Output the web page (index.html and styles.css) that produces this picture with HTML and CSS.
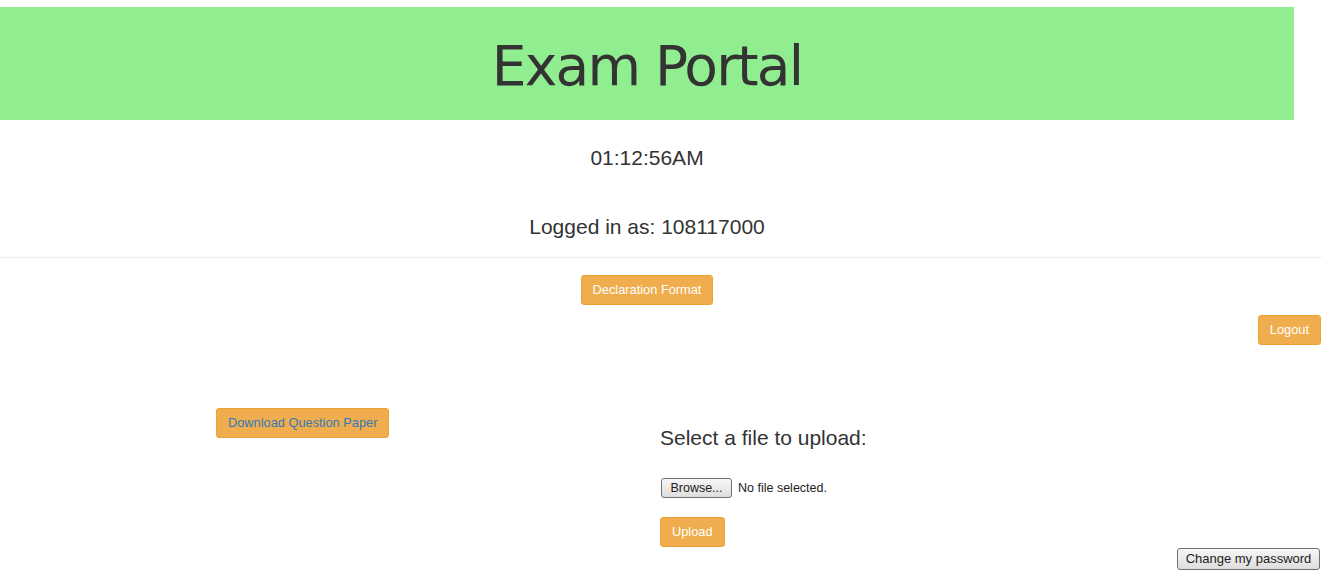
FILE: index.html
```html
<!DOCTYPE html>
<html>
<head>
<meta charset="utf-8">
<title>Exam Portal</title>
<link rel="stylesheet" href="styles.css">
</head>
<body>
<header class="banner">
  <h1 class="title">Exam Portal</h1>
</header>
<div class="info">
  <div class="clock">01:12:56AM</div>
  <div class="user">Logged in as: 108117000</div>
</div>
<hr class="rule">
<div class="decl-row">
  <button class="btn btn-warning">Declaration Format</button>
</div>
<div class="logout-row">
  <button class="btn btn-warning">Logout</button>
</div>
<div class="work">
  <div class="left-col">
    <button class="btn btn-warning btn-link-text">Download Question Paper</button>
  </div>
  <div class="right-col">
    <div class="upload-title">Select a file to upload:</div>
    <div class="file-row">
      <button class="native-btn browse">Browse...</button>
      <span class="file-status">No file selected.</span>
    </div>
    <button class="btn btn-warning">Upload</button>
  </div>
</div>
<div class="pw-row">
  <button class="native-btn pw">Change my password</button>
</div>
</body>
</html>
```
FILE: styles.css
```css
html, body {
  margin: 0;
  padding: 0;
  background: #fff;
}
body {
  font-family: "Liberation Sans", Arial, sans-serif;
  color: #333;
  width: 1330px;
}
.banner {
  margin-top: 7px;
  width: 1294px;
  height: 113px;
  background: #90ee90;
  display: flex;
  align-items: center;
  justify-content: center;
}
.title {
  margin: 0;
  font-family: "Comic Sans MS", "DejaVu Sans", sans-serif;
  font-weight: normal;
  font-size: 55px;
  color: #333;
  letter-spacing: -1.8px;
  padding-top: 5px;
}
.info {
  width: 1294px;
  text-align: center;
  padding-top: 26px;
}
.clock, .user {
  font-size: 21px;
  line-height: 24px;
}
.user {
  margin-top: 45px;
}
.rule {
  margin: 18px 8px 0 0;
  border: 0;
  border-top: 1px solid #eee;
  height: 0;
}
.btn {
  font-family: "Liberation Sans", Arial, sans-serif;
  font-size: 12.8px;
  line-height: 18px;
  padding: 5px 11px;
  border: 1px solid #eea236;
  border-radius: 3px;
  background: #f0ad4e;
  color: #fff;
  cursor: pointer;
}
.btn-link-text {
  color: #337ab7;
}
.decl-row {
  width: 1294px;
  display: flex;
  justify-content: center;
  margin-top: 17px;
}
.logout-row {
  display: flex;
  justify-content: flex-end;
  padding-right: 9px;
  margin-top: 10px;
}
.work {
  display: flex;
  margin-top: 63px;
}
.left-col {
  width: 444px;
  padding-left: 216px;
}
.right-col {
  display: flex;
  flex-direction: column;
  align-items: flex-start;
  padding-top: 18px;
}
.upload-title {
  font-size: 21px;
  line-height: 24px;
}
.file-row {
  display: flex;
  align-items: center;
  margin-top: 28px;
  margin-bottom: 19px;
  padding-left: 1px;
}
.native-btn {
  font-family: "Liberation Sans", Arial, sans-serif;
  font-size: 13px;
  color: #222;
  background: linear-gradient(#f6f6f6, #dedede);
  border: 1px solid #707070;
  border-radius: 3px;
  padding: 0 7px;
  height: 20px;
  line-height: 18px;
}
.browse {
  width: 71px;
  font-size: 12.5px;
}
.file-status {
  margin-left: 6px;
  font-size: 12.5px;
  color: #222;
}
.pw-row {
  display: flex;
  justify-content: flex-end;
  padding-right: 10px;
  margin-top: 1px;
}
.pw {
  height: 22px;
  width: 143px;
  font-size: 13px;
  padding: 0 4px;
}
```
